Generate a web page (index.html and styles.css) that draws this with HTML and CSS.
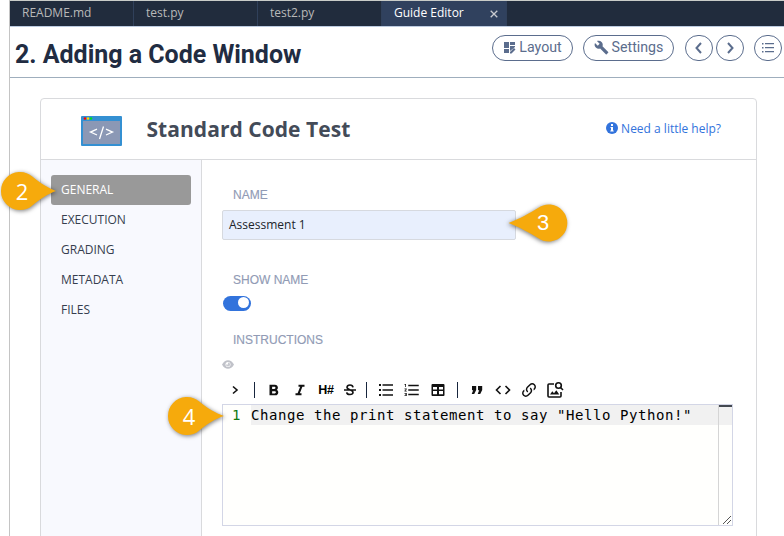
FILE: index.html
```html
<!DOCTYPE html>
<html lang="en">
<head>
<meta charset="utf-8">
<title>Guide Editor</title>
<link rel="stylesheet" href="styles.css">
</head>
<body>
<div class="app">
  <nav class="tabs">
    <div class="tab readme"><span>README.md</span></div>
    <div class="tab"><span>test.py</span></div>
    <div class="tab"><span>test2.py</span></div>
    <div class="tab active"><span>Guide Editor</span><svg class="close" viewBox="0 0 8 8"><path d="M.7.7l6.6 6.6M7.3.7L.7 7.3"/></svg></div>
  </nav>
  <header class="head">
    <h1>2. Adding a Code Window</h1>
    <div class="actions">
      <button class="pill layout"><svg width="13" height="13" viewBox="0 0 13 13"><path d="M1 1h5v6H1zM7 1h5v3H7zM1 8h5v4H1zM7 5h5v1L7 10zM7 11l4-4 1.500 1.500-4 4H7z"/></svg><span>Layout</span></button>
      <button class="pill settings"><svg width="15" height="15" viewBox="0 0 24 24"><path d="M22.700 19l-9.100-9.100c.9-2.300.4-5-1.500-6.900-2-2-5-2.400-7.400-1.300L9 6 6 9 1.600 4.700C.4 7.100.9 10.100 2.900 12.100c1.900 1.900 4.600 2.400 6.900 1.500l9.100 9.100c.4.4 1 .4 1.400 0l2.300-2.300c.5-.4.5-1.100.1-1.400z"/></svg><span>Settings</span></button>
      <button class="round prev"><svg width="12" height="14" viewBox="0 0 12 14"><path class="stroke" d="M8 2L3.500 7 8 12"/></svg></button>
      <button class="round next"><svg width="12" height="14" viewBox="0 0 12 14"><path class="stroke" d="M4 2l4.500 5L4 12"/></svg></button>
      <button class="round menu"><svg width="12" height="12" viewBox="0 0 12 12"><path d="M0 1h1.500v1.500H0zM0 5h1.500v1.500H0zM0 9h1.500v1.500H0zM3 1h9v1.200H3zM3 5h9v1.200H3zM3 9h9v1.200H3z"/></svg></button>
    </div>
  </header>
  <main class="card">
    <div class="cardhead">
      <svg class="logo" width="41" height="30" viewBox="0 0 41 30"><path fill="#3490d2" d="M0 0h41v30H0z"/><path fill="#8b98b5" d="M2 5h37v23H2z"/><circle cx="4" cy="2.500" r="1.300" fill="#f00"/><circle cx="7" cy="2.500" r="1.300" fill="#ffd500"/><circle cx="10" cy="2.500" r="1.300" fill="#0d2"/><path d="M16 13.200l-6.500 2.900 6.500 2.900M22.500 10.500l-4 12.500M25 13.200l6.500 2.900-6.500 2.900" fill="none" stroke="#fff" stroke-width="1.300"/></svg>
      <h2>Standard Code Test</h2>
      <a class="help"><svg width="12" height="12" viewBox="0 0 12 12"><circle cx="6" cy="6" r="6" fill="#3273dc"/><path fill="#fff" d="M5 2h2v2H5zM4.500 5H7v3.500h.7v1H4.300v-1H5V6h-.5z"/></svg><span>Need a little help?</span></a>
    </div>
    <div class="columns">
      <aside class="side">
        <div class="item on">GENERAL</div>
        <div class="item">EXECUTION</div>
        <div class="item">GRADING</div>
        <div class="item">METADATA</div>
        <div class="item">FILES</div>
      </aside>
      <section class="form">
        <div class="label l-name">NAME</div>
        <div class="input">Assessment 1</div>
        <div class="label l-show">SHOW NAME</div>
        <div class="toggle"><i></i></div>
        <div class="label l-inst">INSTRUCTIONS</div>
        <svg class="eye" width="12" height="9" viewBox="0 0 12 9"><path fill="#c0c2c9" d="M0 4.500C3 -1.300 9-1.300 12 4.500 9 10.300 3 10.300 0 4.500z"/><circle cx="6" cy="4.500" r="2.500" fill="#fff"/><path d="M6 4.500V2.400A2.100 2.100 0 1 1 3.900 4.500z" fill="#c8cad0"/></svg>
        <div class="toolbar">
          <span><svg viewBox="0 0 18 18"><path class="ln" d="M7 5.500L11 9l-4 3.500"/></svg></span>
          <b class="sep"></b>
          <span><svg viewBox="0 0 24 24"><path d="M15.600 11.800c1-.7 1.600-1.800 1.600-2.800 0-2.300-1.800-4-4-4H6v14h8c2.100 0 3.700-1.700 3.700-3.800 0-1.500-.9-2.800-2.100-3.400zM9.500 7.500h3c.8 0 1.500.7 1.500 1.500s-.7 1.500-1.500 1.500h-3zm3.500 9H9.500v-3H13c.8 0 1.500.7 1.500 1.500s-.7 1.500-1.500 1.500z"/></svg></span>
          <span><svg viewBox="0 0 24 24"><path d="M10 5v2.700h2.200l-3.400 8.600H6V19h8v-2.700h-2.200l3.400-8.600H18V5z"/></svg></span>
          <span class="hash">H#</span>
          <span class="narrow"><svg viewBox="0 0 18 18"><path class="ln" d="M12 6.300C11.700 3.300 6.200 3.300 6 6.300 5.900 9.300 12.200 8 12 11.500 11.800 14.200 6 14.200 5.700 11.300M3 9h12"/></svg></span>
          <b class="sep"></b>
          <span><svg viewBox="0 0 18 18"><path d="M2 3h2v2H2zM2 8h2v2H2zM2 13h2v2H2zM5.500 3.200H16v1.600H5.500zM5.500 8.200H16v1.600H5.500zM5.500 13.200H16v1.600H5.500z"/></svg></span>
          <span><svg viewBox="0 0 24 24"><path d="M2 17h2v.5H3v1h1v.5H2v1h3v-4H2zm1-9h1V4H2v1h1zm-1 3h1.800L2 13.100v.9h3v-1H3.200L5 10.900V10H2zm5-6v2h14V5zm0 14h14v-2H7zm0-6h14v-2H7z"/></svg></span>
          <span><svg viewBox="0 0 18 18"><path fill-rule="evenodd" d="M3.500 3h11q1 0 1 1v10q0 1-1 1h-11q-1 0-1-1V4q0-1 1-1zM4 6v2.500h4V6zM10 6v2.500h4V6zM4 10v3.300h4V10zM10 10v3.300h4V10z"/></svg></span>
          <b class="sep"></b>
          <span><svg viewBox="0 0 18 18"><path d="M4 5h4.200v4L6.200 13H3.700l1.500-3.700H4zM10 5h4.200v4l-2 4H9.700l1.500-3.700H10z"/></svg></span>
          <span><svg viewBox="0 0 18 18"><path class="ln" d="M6.500 5L2.500 9l4 4M11.500 5L15.500 9l-4 4"/></svg></span>
          <span><svg viewBox="0 0 24 24"><path d="M10.600 13.400c.4.400.4 1 0 1.400-.4.400-1 .4-1.400 0-2-2-2-5.100 0-7.100l3.500-3.500c2-2 5.100-2 7.100 0s2 5.100 0 7.100l-1.500 1.500c0-.8-.1-1.600-.4-2.400l.5-.5c1.200-1.200 1.200-3.100 0-4.300s-3.100-1.200-4.300 0l-3.500 3.500c-1.200 1.200-1.200 3.100 0 4.300m2.800-4.200c.4-.4 1-.4 1.400 0 2 2 2 5.100 0 7.100l-3.500 3.500c-2 2-5.100 2-7.100 0s-2-5.100 0-7.100l1.500-1.500c0 .8.100 1.700.4 2.400l-.5.500c-1.200 1.200-1.200 3.100 0 4.300s3.100 1.200 4.300 0l3.500-3.500c1.200-1.200 1.200-3.100 0-4.300-.4-.4-.4-1.100 0-1.400z"/></svg></span>
          <span><svg viewBox="0 0 18 18"><path class="ln" d="M8 3H3q-1 0-1 1v11q0 1 1 1h11q1 0 1-1v-4"/><circle class="ln" cx="12.500" cy="4.500" r="2.800"/><path class="ln" d="M14.500 6.500l2.500 2.500"/><path d="M4 13.500L6.300 10.300l1.700 2 2.300-3.100 3 4.300z"/></svg></span>
        </div>
        <div class="editor">
          <div class="gutter">1</div>
          <div class="code">Change the print statement to say "Hello Python!"</div>
          <div class="ruler"></div>
          <svg class="grip" width="10" height="10" viewBox="0 0 10 10"><path d="M1 9L9 1M5 9l4-4"/></svg>
        </div>
      </section>
    </div>
  </main>
</div>
<div class="pin p2"><svg width="62" height="46" viewBox="0 0 62 46"><path d="M56 23C49 20.500 39 14.500 32 8.300A19 19 0 1 0 32 37.700C39 31.500 49 25.500 56 23z"/></svg><span>2</span></div>
<div class="pin p3"><svg width="66" height="46" viewBox="0 0 66 46"><path d="M60.500 23C51 19.500 38 12.500 31 8A18.500 18.500 0 1 0 31 38C38 33.500 51 26.500 60.500 23z"/></svg><span>3</span></div>
<div class="pin p4"><svg width="62" height="46" viewBox="0 0 62 46"><path d="M57 23C49 20.500 39 14.500 32 8.300A19 19 0 1 0 32 37.700C39 31.500 49 25.500 57 23z"/></svg><span>4</span></div>
</body>
</html>
```
FILE: styles.css
```css
* { box-sizing: border-box; }
body { margin: 0; width: 784px; height: 536px; overflow: hidden; background: #fff; font-family: "Open Sans", sans-serif; }
.app { margin-left: 9px; height: 536px; border-left: 1px solid #c4c4c4; border-top: 1px solid #c9ccc8; overflow: hidden; }
.tabs { display: flex; height: 26px; background: #212c3d; border-bottom: 1px solid #bccbe0; }
.tab { width: 124px; padding: 0 12px; border-right: 1px solid #30405a; font-size: 12px; line-height: 24px; color: #b9b9b9; display: flex; }
.tab.active { width: 125px; background: #30415e; color: #fff; }
.tab.active span { width: 96px; flex: none; }
.close { width: 8px; height: 8px; margin-top: 9px; fill: none; stroke: #c9cbd0; stroke-width: 1.3; flex: none; }
.head { height: 51px; border-bottom: 1px solid #9faebd; display: flex; justify-content: space-between; padding-left: 5px; }
h1 { margin: 0; font: bold 25px/56px Roboto, sans-serif; color: #212c42; white-space: nowrap; letter-spacing: -.02px; }
.actions { display: flex; padding-top: 8px; margin-right: 2px; }
button { background: #fff; border: 1px solid #5b6d8d; padding: 0; height: 26px; border-radius: 13px; display: flex; align-items: center; justify-content: center; color: #5b6d8d; font: 14px Roboto, sans-serif; }
button svg { fill: #5b6d8d; }
.stroke { fill: none; stroke: #5b6d8d; stroke-width: 2; }
.pill { gap: 3px; padding-bottom: 2px; }
.pill span { font-size: 14.2px; }
.layout { width: 81px; margin-right: 10px; }
.settings { width: 91px; margin-right: 11px; }
.round { width: 28px; }
.prev { margin-right: 3px; }
.next { margin-right: 10px; }
.card { margin: 20px 27px 0 30px; width: 717px; height: 460px; border: 1px solid #d9dadd; border-radius: 4px; }
.cardhead { height: 61px; border-bottom: 1px solid #d9dadd; display: flex; align-items: center; padding: 0 35px 0 40px; }
.logo { flex: none; margin-top: 4px; border-radius: 1px; }
h2 { margin: 0 0 0 24.500px; font-size: 21px; line-height: 30px; font-weight: 700; color: #434b58; white-space: nowrap; flex: 1; letter-spacing: .04px; }
.help { color: #3273dc; font-size: 12px; display: flex; align-items: center; gap: 3px; margin-bottom: 2px; white-space: nowrap; }
.columns { display: flex; height: 398px; }
.side { width: 161px; border-right: 1px solid #d9dadd; background: #f8f9fe; padding: 15px 10px; }
.item { height: 30px; line-height: 29px; padding-left: 10px; font-size: 12px; color: #363e4e; border-radius: 3px; }
.item.on { background: #999; color: #fff; }
.form { padding-left: 20px; display: flex; flex-direction: column; align-items: flex-start; }
.label { margin-left: 11px; font: 12px/16px "Liberation Sans", sans-serif; color: #919bb5; -webkit-text-stroke: .15px #919bb5; }
.l-name { margin-top: 27px; }
.input { margin-top: 7px; width: 294px; height: 30px; border: 1px solid #d6d9df; border-radius: 2px; background: #e8effd; font-size: 12px; line-height: 28px; padding-left: 6px; color: #20242b; }
.l-show { margin-top: 32px; }
.toggle { margin: 8px 0 0 1px; width: 28px; height: 15px; background: #3273dc; border-radius: 8px; padding: 1px 2px 0 15px; }
.toggle i { display: block; width: 11px; height: 11px; background: #fff; border-radius: 50%; }
.l-inst { margin-top: 21px; }
.eye { margin-top: 12px; }
.toolbar { height: 22px; margin-top: 10px; display: flex; align-items: center; }
.toolbar span { width: 26px; display: flex; justify-content: center; }
.toolbar .narrow { width: 21px; }
.toolbar .hash { font: bold 12.500px/18px "Liberation Sans", sans-serif; letter-spacing: -.3px; }
.toolbar svg { width: 18px; height: 18px; fill: #111; }
.toolbar .ln { fill: none; stroke: #111; stroke-width: 1.6; }
.sep { width: 1px; height: 16px; margin: 0 6px; background: #17263d; }
.editor { margin-top: 3px; width: 511px; height: 122px; border: 1px solid #d3d6e6; display: flex; position: relative; background: #fffffd; font: 14px/20px "DejaVu Sans Mono", monospace; color: #000; }
.gutter { width: 28px; padding-left: 9px; color: #117a11; }
.code { width: 467px; height: 20px; background: #f1f1f1; white-space: pre; letter-spacing: .572px; }
.ruler { width: 14px; border-left: 1px solid #d5d5d5; background: linear-gradient(#444951 0 2px, #f1f1f1 2px 20px, transparent 20px); }
.grip { position: absolute; right: 0; bottom: 0; fill: none; stroke: #555; stroke-width: 1; }
.pin { position: absolute; width: 62px; height: 46px; }
.pin svg { display: block; overflow: visible; fill: #f6aa0c; filter: drop-shadow(1px 1px 2px rgba(0,0,0,.5)); }
.pin span { position: absolute; top: 9px; left: 12px; width: 20px; text-align: center; font: 22px/28px "Open Sans", sans-serif; color: #fff; }
.p2 { left: 0; top: 168px; }
.p3 { left: 503px; top: 200px; width: 66px; }
.p3 svg { transform: scaleX(-1); }
.p3 span { left: 30px; font-family: "Liberation Sans", sans-serif; }
.p4 { left: 167px; top: 393px; }
```
